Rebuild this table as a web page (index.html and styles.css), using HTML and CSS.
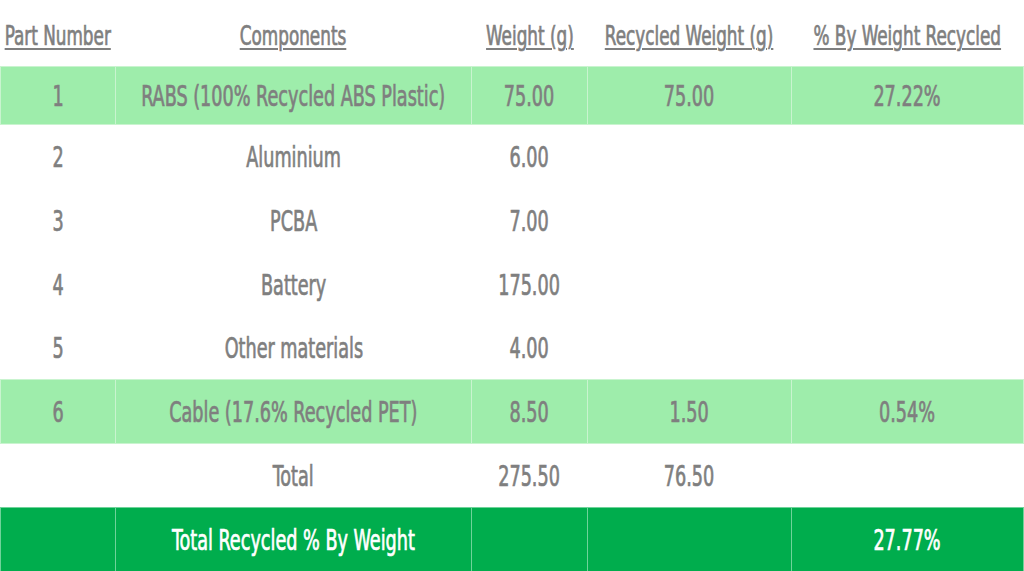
FILE: index.html
```html
<!DOCTYPE html>
<html>
<head>
<meta charset="utf-8">
<link rel="stylesheet" href="styles.css">
</head>
<body>
<table class="sheet">
  <colgroup>
    <col class="c1"><col class="c2"><col class="c3"><col class="c4"><col class="c5">
  </colgroup>
  <thead>
    <tr class="head">
      <th><span class="t">Part Number</span></th>
      <th><span class="t">Components</span></th>
      <th><span class="t">Weight (g)</span></th>
      <th><span class="t">Recycled Weight (g)</span></th>
      <th><span class="t">% By Weight Recycled</span></th>
    </tr>
  </thead>
  <tbody>
    <tr class="row light first">
      <td><span class="t">1</span></td>
      <td><span class="t">RABS (100% Recycled ABS Plastic)</span></td>
      <td><span class="t">75.00</span></td>
      <td><span class="t">75.00</span></td>
      <td><span class="t">27.22%</span></td>
    </tr>
    <tr class="row plain">
      <td><span class="t">2</span></td>
      <td><span class="t">Aluminium</span></td>
      <td><span class="t">6.00</span></td>
      <td></td><td></td>
    </tr>
    <tr class="row plain">
      <td><span class="t">3</span></td>
      <td><span class="t">PCBA</span></td>
      <td><span class="t">7.00</span></td>
      <td></td><td></td>
    </tr>
    <tr class="row plain">
      <td><span class="t">4</span></td>
      <td><span class="t">Battery</span></td>
      <td><span class="t">175.00</span></td>
      <td></td><td></td>
    </tr>
    <tr class="row plain short">
      <td><span class="t">5</span></td>
      <td><span class="t">Other materials</span></td>
      <td><span class="t">4.00</span></td>
      <td></td><td></td>
    </tr>
    <tr class="row light">
      <td><span class="t">6</span></td>
      <td><span class="t">Cable (17.6% Recycled PET)</span></td>
      <td><span class="t">8.50</span></td>
      <td><span class="t">1.50</span></td>
      <td><span class="t">0.54%</span></td>
    </tr>
    <tr class="row total">
      <td></td>
      <td><span class="t">Total</span></td>
      <td><span class="t">275.50</span></td>
      <td><span class="t">76.50</span></td>
      <td></td>
    </tr>
    <tr class="row dark">
      <td></td>
      <td><span class="t">Total Recycled % By Weight</span></td>
      <td></td>
      <td></td>
      <td><span class="t">27.77%</span></td>
    </tr>
  </tbody>
</table>
</body>
</html>
```
FILE: styles.css
```css
html, body {
  margin: 0;
  padding: 0;
  background: #ffffff;
}
body {
  width: 1024px;
  height: 571px;
  overflow: hidden;
  font-family: "DejaVu Sans Condensed", "Liberation Sans", sans-serif;
  color: #7f7f7f;
}
.sheet {
  border-collapse: collapse;
  table-layout: fixed;
  width: 1023px;
}
.c1 { width: 115px; }
.c2 { width: 356px; }
.c3 { width: 116px; }
.c4 { width: 204px; }
.c5 { width: 232px; }
th, td {
  padding: 0;
  text-align: center;
  vertical-align: middle;
  font-size: 28px;
  font-weight: normal;
  white-space: nowrap;
  overflow: visible;
}
.t {
  display: inline-block;
  margin: 0 -80px;
  transform: scaleX(0.7);
  transform-origin: center;
  -webkit-text-stroke: 0.7px currentColor;
}
.head th {
  height: 66px;
  padding-top: 6px;
  box-sizing: border-box;
  font-size: 26px;
  font-weight: normal;
}
.head .t {
  text-decoration: underline;
  text-decoration-thickness: 2px;
  text-underline-offset: 3px;
  transform: scaleX(0.72);
}
.row td {
  height: 64px;
  padding-top: 2px;
  box-sizing: border-box;
}
.row.plain.short td {
  height: 63px;
}
.row.first td {
  height: 58px;
}
.light td {
  background: #9eedab;
  border: 1px solid #c9f4cf;
}
.dark td {
  background: #00ad4d;
  border: 1px solid #6fd39a;
  color: #ffffff;
}
```
